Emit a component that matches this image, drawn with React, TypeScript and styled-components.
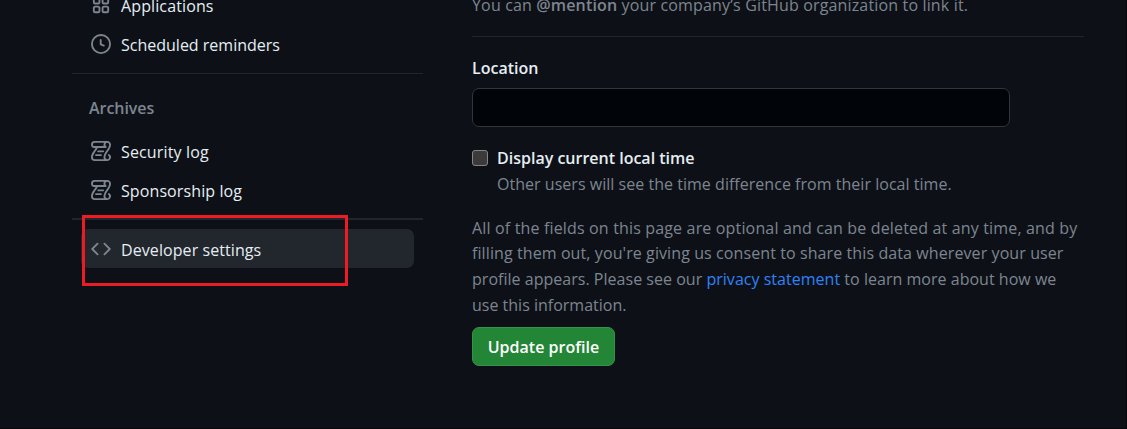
import React from "react";
import styled, { createGlobalStyle } from "styled-components";

const GlobalStyle = createGlobalStyle`
  *, *::before, *::after { box-sizing: border-box; }
  html, body { margin: 0; padding: 0; background: #0d1117; overflow: hidden; }
`;

const Page = styled.div`
  display: flex;
  gap: 49px;
  width: 1127px;
  height: 429px;
  padding-left: 72px;
  overflow: hidden;
  background: #0d1117;
  border-right: 1px solid #05070b;
  border-bottom: 1px solid #05070b;
  color: #e6edf3;
  font-family: "Open Sans", "Noto Sans", sans-serif;
  font-size: 16px;
  line-height: 25px;
`;

const Sidebar = styled.nav`
  width: 351px;
  flex: none;
`;

const NavList = styled.ul<{ $top?: number }>`
  list-style: none;
  margin: ${(p) => p.$top ?? 0}px 0 0;
  padding: 0 9px;
`;

const Icon = styled.svg`
  width: 20px;
  height: 20px;
  flex: none;
  margin-bottom: 1px;
  fill: #7d8590;
`;

const NavItem = styled.li<{ $active?: boolean }>`
  position: relative;
  display: flex;
  align-items: center;
  gap: 10px;
  height: 39px;
  padding-left: 10px;
  border-radius: 7px;
  background: ${(p) => (p.$active ? "#22262d" : "transparent")};

  ${Icon} {
    margin-bottom: ${(p) => (p.$active ? 0 : 1)}px;
  }
`;

const Label = styled.span<{ $track: number; $drop?: number }>`
  padding-top: ${(p) => p.$drop ?? 0}px;
  letter-spacing: ${(p) => p.$track}px;
  white-space: nowrap;
`;

const SidebarDivider = styled.div<{ $top: number; $size: number }>`
  height: ${(p) => p.$size}px;
  margin-top: ${(p) => p.$top}px;
  background: #21262d;
`;

const GroupTitle = styled.h3`
  margin: 22px 0 0 17px;
  font-size: 16px;
  line-height: 25px;
  font-weight: 600;
  color: #7d8590;
`;

const Highlight = styled.div`
  position: absolute;
  left: 1px;
  top: -14px;
  width: 266px;
  height: 71px;
  border: 3px solid #ed1c24;
`;

const Main = styled.main`
  width: 612px;
  flex: none;
`;

const Note = styled.p<{ $top: number; $left?: number }>`
  margin: ${(p) => p.$top}px 0 0 ${(p) => p.$left ?? 0}px;
  color: #7d8590;
`;

const Line = styled.span<{ $track: number; $height?: number }>`
  display: block;
  height: ${(p) => p.$height ?? 25}px;
  line-height: 25px;
  white-space: nowrap;
  letter-spacing: ${(p) => p.$track}px;
`;

const Strong = styled.strong`
  font-weight: 600;
`;

const MainDivider = styled.hr`
  height: 1px;
  margin: 18px 0 0;
  border: 0;
  background: #21262d;
`;

const FieldLabel = styled.label`
  display: block;
  margin-top: 19px;
  font-weight: 600;
`;

const TextInput = styled.input`
  display: block;
  width: 538px;
  height: 39px;
  margin: 7px 0 0;
  border: 1px solid #30363d;
  border-radius: 7px;
  background: #010409;
`;

const CheckRow = styled.label`
  display: flex;
  align-items: center;
  gap: 9px;
  height: 25px;
  margin-top: 18px;
  font-weight: 600;
`;

const Checkbox = styled.input`
  appearance: none;
  width: 16px;
  height: 16px;
  margin: 0;
  border: 1px solid #858585;
  border-radius: 3px;
  background: #3b3b3b;
`;

const Link = styled.a`
  color: #2f81f7;
`;

const Button = styled.button`
  display: block;
  width: 143px;
  height: 39px;
  margin: 9px 0 0;
  padding: 2px 0 0;
  border: 1px solid #36914a;
  border-radius: 7px;
  background: #238636;
  color: #fff;
  font: 600 16px/25px "Open Sans", "Noto Sans", sans-serif;
`;

const paths = {
  apps: "M1.5 3.25c0-.966.784-1.75 1.75-1.75h2.5c.966 0 1.75.784 1.75 1.75v2.5A1.75 1.75 0 0 1 5.75 7.5h-2.5A1.75 1.75 0 0 1 1.5 5.75Zm7 0c0-.966.784-1.75 1.75-1.75h2.5c.966 0 1.75.784 1.75 1.75v2.5a1.75 1.75 0 0 1-1.75 1.75h-2.5A1.75 1.75 0 0 1 8.5 5.75Zm-7 7c0-.966.784-1.75 1.75-1.75h2.5c.966 0 1.75.784 1.75 1.75v2.5a1.75 1.75 0 0 1-1.75 1.75h-2.5a1.75 1.75 0 0 1-1.75-1.75Zm7 0c0-.966.784-1.75 1.75-1.75h2.5c.966 0 1.75.784 1.75 1.75v2.5a1.75 1.75 0 0 1-1.75 1.75h-2.5a1.75 1.75 0 0 1-1.75-1.75ZM3.25 3a.25.25 0 0 0-.25.25v2.5c0 .138.112.25.25.25h2.5A.25.25 0 0 0 6 5.75v-2.5A.25.25 0 0 0 5.75 3Zm7 0a.25.25 0 0 0-.25.25v2.5c0 .138.112.25.25.25h2.5a.25.25 0 0 0 .25-.25v-2.5a.25.25 0 0 0-.25-.25Zm-7 7a.25.25 0 0 0-.25.25v2.5c0 .138.112.25.25.25h2.5a.25.25 0 0 0 .25-.25v-2.5a.25.25 0 0 0-.25-.25Zm7 0a.25.25 0 0 0-.25.25v2.5c0 .138.112.25.25.25h2.5a.25.25 0 0 0 .25-.25v-2.5a.25.25 0 0 0-.25-.25Z",
  clock: "M8 0a8 8 0 1 1 0 16A8 8 0 0 1 8 0ZM1.5 8a6.5 6.5 0 1 0 13 0 6.5 6.5 0 0 0-13 0Zm7-3.25v2.992l2.028.812a.75.75 0 0 1-.557 1.392l-2.5-1A.751.751 0 0 1 7 8.25v-3.5a.75.75 0 0 1 1.5 0Z",
  log: "M5 8.25a.75.75 0 0 1 .75-.75h4a.75.75 0 0 1 0 1.5h-4A.75.75 0 0 1 5 8.25ZM4 10.5A.75.75 0 0 0 4 12h4a.75.75 0 0 0 0-1.5H4ZM13-.005c1.654 0 3 1.328 3 3 0 .982-.338 1.933-.783 2.818-.443.879-1.028 1.758-1.582 2.588l-.011.017c-.568.853-1.104 1.659-1.501 2.446-.398.789-.623 1.494-.623 2.136a1.5 1.5 0 1 0 2.333-1.248.75.75 0 0 1 .834-1.246A3 3 0 0 1 13 16H3a3 3 0 0 1-3-3c0-1.582.891-3.135 1.777-4.506.209-.322.418-.637.623-.946.473-.709.923-1.386 1.287-2.048H2.51c-.576 0-1.381-.133-1.907-.783A2.68 2.68 0 0 1 0 2.995a3 3 0 0 1 3-3Zm0 1.5a1.5 1.5 0 0 0-1.5 1.5c0 .476.223.834.667 1.132A.75.75 0 0 1 11.75 5.5H5.368c-.467 1.003-1.141 2.015-1.773 2.963-.192.289-.381.571-.558.845C2.13 10.711 1.5 11.916 1.5 13A1.5 1.5 0 0 0 3 14.5h7.401A2.989 2.989 0 0 1 10 13c0-.979.338-1.928.784-2.812.441-.874 1.023-1.748 1.575-2.576l.017-.026c.568-.853 1.103-1.658 1.501-2.448.398-.79.623-1.497.623-2.143 0-.838-.669-1.5-1.5-1.5Zm-10 0a1.5 1.5 0 0 0-1.5 1.5c0 .321.1.569.27.778.097.12.325.227.74.227h7.674A2.737 2.737 0 0 1 10 2.995c0-.546.146-1.059.401-1.5Z",
  code: "m11.28 3.22 4.25 4.25a.75.75 0 0 1 0 1.06l-4.25 4.25a.749.749 0 0 1-1.275-.326.749.749 0 0 1 .215-.734L13.94 8l-3.72-3.72a.749.749 0 0 1 .326-1.275.749.749 0 0 1 .734.215Zm-6.56 0a.751.751 0 0 1 1.042.018.751.751 0 0 1 .018 1.042L2.06 8l3.72 3.72a.749.749 0 0 1-.326 1.275.749.749 0 0 1-.734-.215L.47 8.53a.75.75 0 0 1 0-1.06Z",
};

function NavIcon({ name }: { name: keyof typeof paths }) {
  return (
    <Icon viewBox="0 0 16 16" aria-hidden="true">
      <path fillRule="evenodd" d={paths[name]} />
    </Icon>
  );
}

export default function App() {
  return (
    <>
      <GlobalStyle />
      <Page>
        <Sidebar>
          <NavList $top={-14}>
            <NavItem><NavIcon name="apps" /><Label $drop={2} $track={0.12}>Applications</Label></NavItem>
            <NavItem><NavIcon name="clock" /><Label $drop={2} $track={0}>Scheduled reminders</Label></NavItem>
          </NavList>
          <SidebarDivider $top={9} $size={1} />
          <GroupTitle><Label $track={-0.05}>Archives</Label></GroupTitle>
          <NavList $top={11}>
            <NavItem><NavIcon name="log" /><Label $drop={2} $track={0.15}>Security log</Label></NavItem>
            <NavItem><NavIcon name="log" /><Label $drop={2} $track={0.1}>Sponsorship log</Label></NavItem>
          </NavList>
          <SidebarDivider $top={8} $size={2} />
          <NavList $top={9}>
            <NavItem $active>
              <NavIcon name="code" /><Label $drop={3} $track={0.08}>Developer settings</Label>
              <Highlight />
            </NavItem>
          </NavList>
        </Sidebar>
        <Main>
          <Note $top={-7}>
            <Line $track={0.155}>You can <Strong>@mention</Strong> your company’s GitHub organization to link it.</Line>
          </Note>
          <MainDivider />
          <FieldLabel htmlFor="location"><Label $track={0}>Location</Label></FieldLabel>
          <TextInput id="location" type="text" />
          <CheckRow>
            <Checkbox type="checkbox" />
            <Label $drop={1} $track={0}>Display current local time</Label>
          </CheckRow>
          <Note $top={2} $left={25}>
            <Line $track={0.03}>Other users will see the time difference from their local time.</Line>
          </Note>
          <Note $top={19}>
            <Line $track={0.16}>All of the fields on this page are optional and can be deleted at any time, and by</Line>
            <Line $height={26} $track={0.095}>filling them out, you're giving us consent to share this data wherever your user</Line>
            <Line $height={26} $track={0.025}>profile appears. Please see our <Link>privacy statement</Link> to learn more about how we</Line>
            <Line $track={0}>use this information.</Line>
          </Note>
          <Button><Label $track={0.02}>Update profile</Label></Button>
        </Main>
      </Page>
    </>
  );
}
